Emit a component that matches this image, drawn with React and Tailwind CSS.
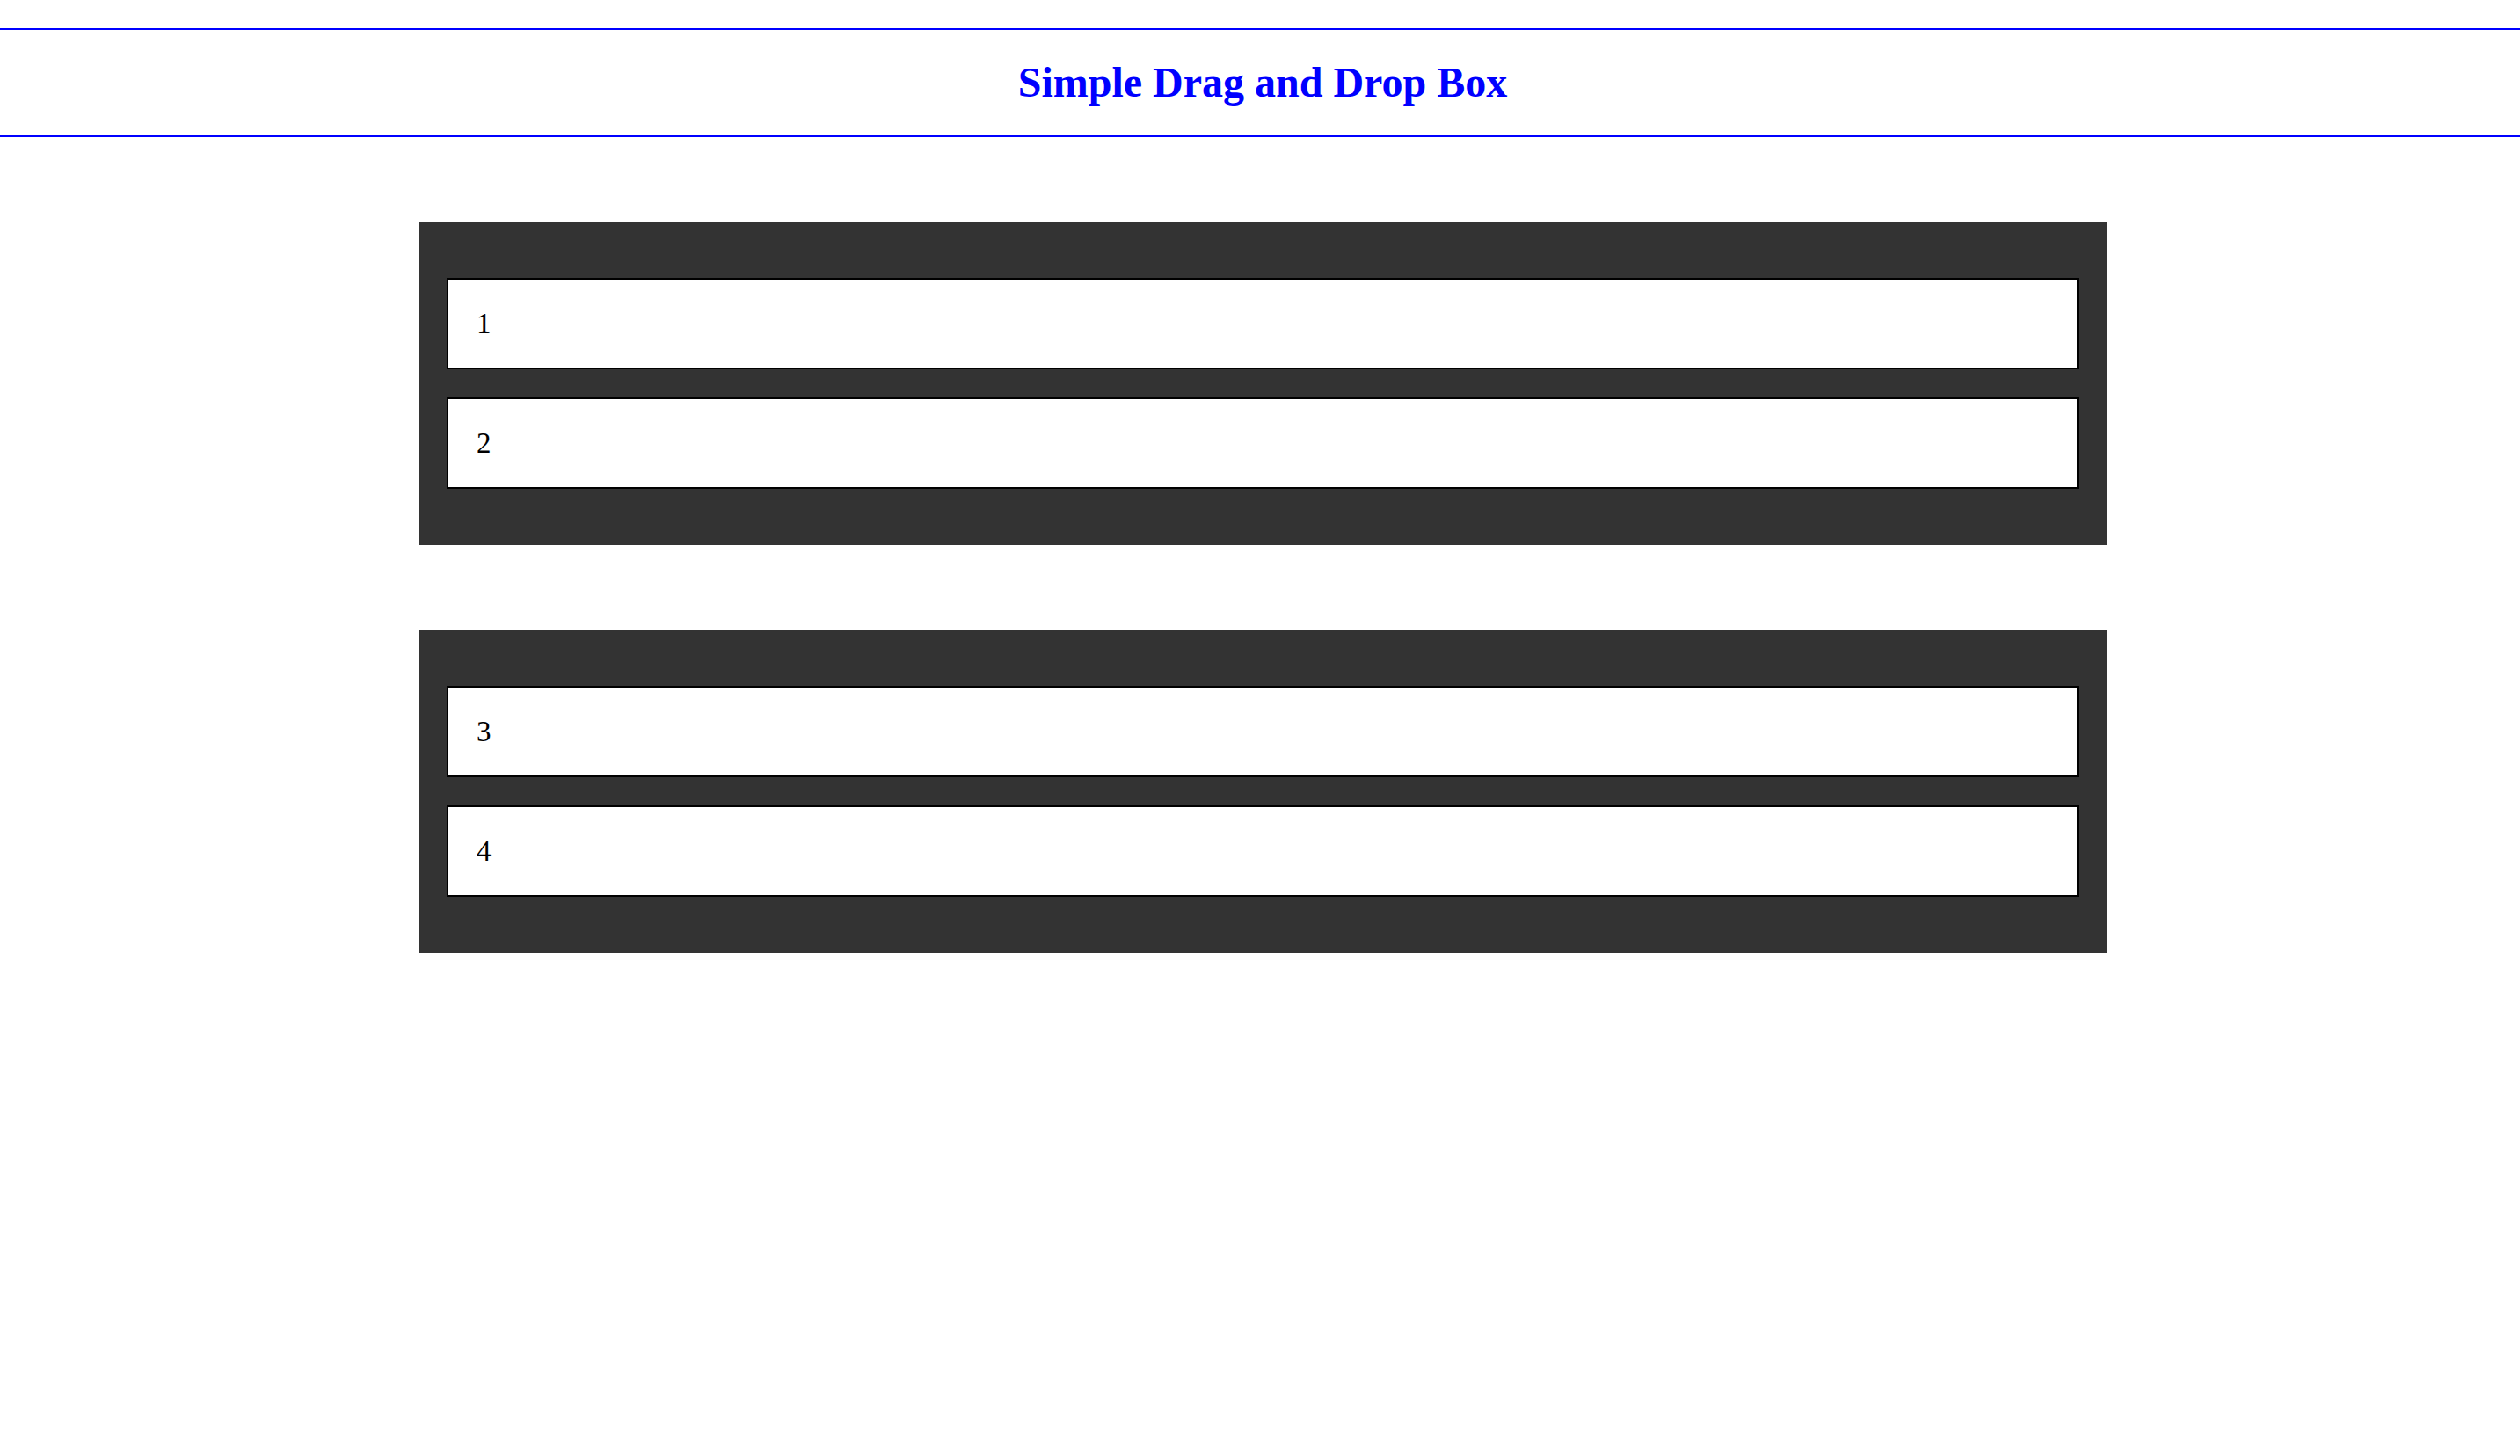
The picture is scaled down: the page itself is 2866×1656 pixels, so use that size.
const boxes = [
  ["1", "2"],
  ["3", "4"],
];

const App = () => {
  return (
    <div className="min-h-screen bg-white font-['Liberation_Serif','Times_New_Roman',serif] text-black">
      <div className="pt-[32px]">
        <div className="h-[124px] border-y-2 border-[#0000ff] flex items-center justify-center pl-[6px]">
          <h2 className="text-[48px] font-bold text-[#0000ff] leading-none">
            Simple Drag and Drop Box
          </h2>
        </div>
      </div>

      <div className="pl-[6px] pt-[96px] flex flex-col items-center gap-[96px]">
        {boxes.map((items, i) => (
          <div
            key={i}
            className="w-[1920px] bg-[#333333] px-[32px] py-[64px] flex flex-col gap-[32px]"
          >
            {items.map((item) => (
              <div
                key={item}
                className="bg-white border-2 border-black px-[32px] py-[32px] text-[33px] leading-[36px]"
              >
                {item}
              </div>
            ))}
          </div>
        ))}
      </div>
    </div>
  );
};

export default App;
